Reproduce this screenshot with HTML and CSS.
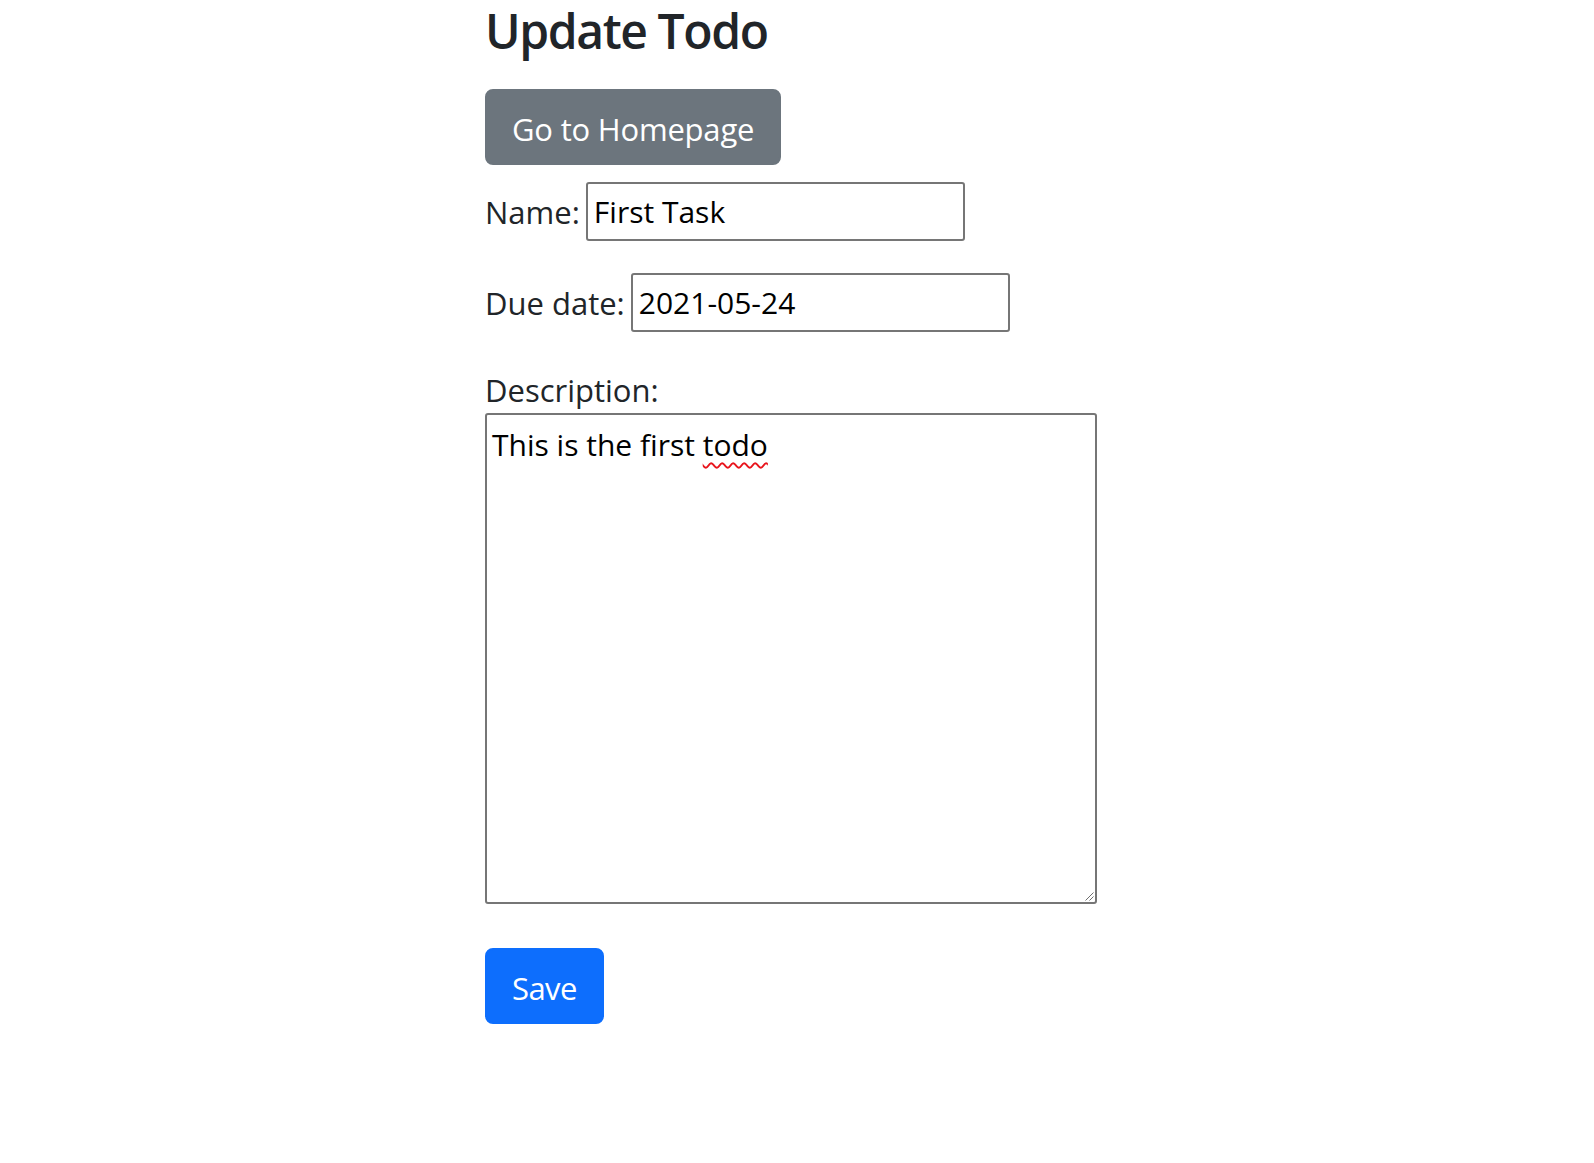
FILE: index.html
```html
<!DOCTYPE html>
<html lang="en">
<head>
<meta charset="utf-8">
<title>Update Todo</title>
<link rel="stylesheet" href="styles.css">
</head>
<body>
<main class="container">
  <h1 class="title">Update Todo</h1>
  <div class="nav-row">
    <a class="btn btn-secondary" href="#">Go to Homepage</a>
  </div>
  <form class="todo-form">
    <div class="field field-inline">
      <label class="field-label" for="name">Name:</label>
      <input id="name" class="text-input" type="text" value="First Task">
    </div>
    <div class="field field-inline field-spaced">
      <label class="field-label" for="due">Due date:</label>
      <input id="due" class="text-input" type="text" value="2021-05-24">
    </div>
    <div class="field field-block">
      <label class="field-label block-label" for="desc">Description:</label>
      <div id="desc" class="textarea" role="textbox" aria-multiline="true">This is the first <span class="misspelled">todo</span><svg class="resize-grip" width="10" height="10" viewBox="0 0 10 10" aria-hidden="true"><line x1="1.5" y1="9.5" x2="9.5" y2="1.5"/><line x1="5.5" y1="9.5" x2="9.5" y2="5.5"/></svg></div>
    </div>
    <div class="nav-row submit-row">
      <button class="btn btn-primary" type="submit">Save</button>
    </div>
  </form>
</main>
</body>
</html>
```

FILE: styles.css
```css
* {
  box-sizing: border-box;
}

body {
  margin: 0;
  background: #ffffff;
  color: #212529;
  font-family: "Open Sans", "Noto Sans", sans-serif;
  font-size: 30px;
}

.container {
  width: 624px;
  margin: 0 auto;
}

.title {
  margin: 0 0 27px;
  font-size: 48px;
  font-weight: 600;
  line-height: 62px;
  letter-spacing: -1.4px;
  color: #212529;
}

.nav-row {
  display: flex;
}

.btn {
  display: inline-block;
  padding: 14px 25px 10px;
  border: 2px solid transparent;
  border-radius: 8px;
  font-family: inherit;
  font-size: 31px;
  font-weight: 400;
  line-height: 48px;
  color: #ffffff;
  text-decoration: none;
  cursor: pointer;
}

.btn-secondary {
  background: #6c757d;
  border-color: #6c757d;
  letter-spacing: -0.2px;
}

.btn-primary {
  background: #0d6efd;
  border-color: #0d6efd;
  letter-spacing: -0.6px;
}

.todo-form {
  margin: 17px 0 0;
}

.field-inline {
  display: flex;
  align-items: center;
  gap: 6px;
  height: 59px;
}

.field-spaced {
  margin-top: 32px;
}

.field-label {
  font-size: 31px;
  line-height: 44px;
  color: #212529;
}

.text-input {
  width: 379px;
  height: 59px;
  padding: 0 6px;
  border: 2px solid #767676;
  border-radius: 3px;
  font-family: inherit;
  font-size: 30px;
  color: #000000;
  background: #ffffff;
}

.field-block {
  margin-top: 36px;
}

.block-label {
  display: block;
  line-height: 45px;
}

.textarea {
  position: relative;
  width: 612px;
  height: 491px;
  padding: 9px 5px;
  border: 2px solid #767676;
  border-radius: 3px;
  font-size: 30px;
  line-height: normal;
  color: #000000;
  background: #ffffff;
}

.misspelled {
  text-decoration: underline wavy #e8141c;
  text-decoration-thickness: 2px;
  text-underline-offset: 6px;
}

.resize-grip {
  position: absolute;
  right: 1px;
  bottom: 1px;
  stroke: #6f6f6f;
  stroke-width: 1;
}

.submit-row {
  margin-top: 44px;
}
```
